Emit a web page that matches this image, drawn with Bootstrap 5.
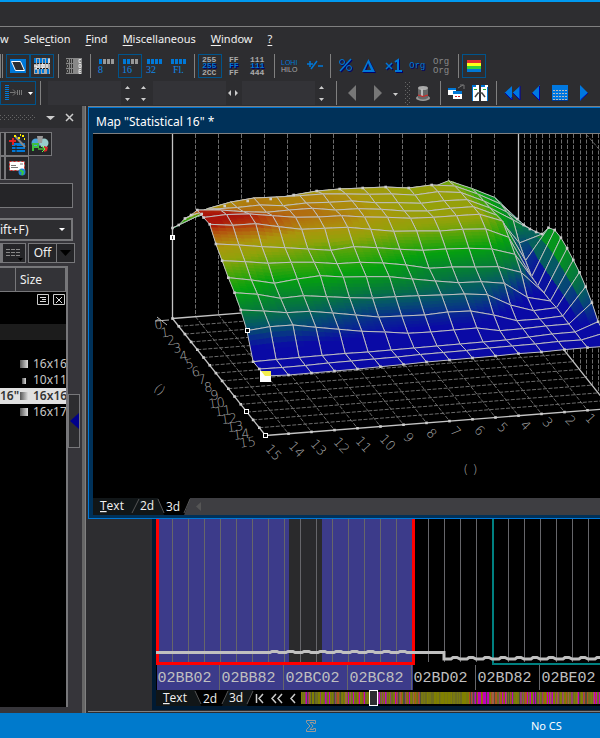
<!DOCTYPE html>
<html lang="en">
<head>
<meta charset="utf-8">
<meta name="viewport" content="width=device-width, initial-scale=1">
<title>Map editor</title>
<link href="https://cdn.jsdelivr.net/npm/bootstrap@5.3.0/dist/css/bootstrap.min.css" rel="stylesheet">
<style>
body{background:#2d2d30;color:#f1f1f1;font:12px/16px "Noto Sans","Open Sans",sans-serif;min-height:100vh;overflow:hidden}
button{color:inherit;font:inherit;padding:0;border:0;background:none}
svg{display:block}
.caption-bar{height:27px;border-top:2px solid #0099f0;border-bottom:1px solid #808080}
.menu-bar{height:27px;gap:15px;padding-top:4px;font-size:11px}
.menu-bar a{color:#f1f1f1;text-decoration:none}
.menu-bar u{text-underline-offset:2px}
.tool-row{height:24px;overflow:hidden}
.tool-row.second{margin-top:3px;height:25px}
.tool{width:24px;height:24px;flex:none}
.tool.on{box-shadow:inset 0 0 0 1px #00548c}
.shade{filter:drop-shadow(1px 1px 0 #00006b)}
.rule{width:8px;height:24px;flex:none;background:linear-gradient(#808080,#808080) 4px 0/1px 100% no-repeat}
.field{width:73px;height:24px;border:0;background:#333337;color:#f1f1f1;flex:none}
.spin{flex:none}
.side{width:88px;flex:none;background:#36353a;position:relative;border-right:2px solid #2d2d30}
.side-main{width:82px;overflow:hidden}
.divider{width:4px;background:#666;border-right:1px solid #808080}
.side-head{height:22px;background:#2d2d30}
.cell{border:1px solid #77777a;height:24px;background:#252528;flex:none}
.cell.wide{width:24px;margin-right:-1px}
.search-box{width:73px;height:25px;border:1px solid #77777a;border-left:0;background:#252528;color:#fff;margin-top:3px}
.choice{width:73px;height:23px;border:2px solid #77777a;border-left:0;background:#2d2d30;color:#f1f1f1;appearance:none;font-size:12px;padding:0}
.map-list{width:68px;border:2px solid #77777a;border-left:0;border-bottom:0;background:#000}
.map-list th{font-weight:400;height:24px;background:#333337;border-right:1px solid #77777a;border-bottom:1px solid #77777a;padding:0 0 0 4px}
.map-list table{width:66px;table-layout:fixed;border-collapse:separate;border-spacing:0}
.map-list td{height:16px;padding:0;line-height:16px;color:#c8c8c8;white-space:nowrap;overflow:hidden}
.map-list td:first-child{overflow:visible}
.map-list .picked td{background:#e0e0e0;color:#333;font-weight:600}
.swatch{display:inline-block;width:8px;height:8px;background:linear-gradient(90deg,#555,#ddd);margin:0 5px 0 4px}
.swatch.little{width:4px;height:6px;margin:0 7px 0 6px}
.slide-btn{width:12px;height:54px;border:1px solid #77777a;background:#2d2d30}
.map-window{border:1px solid #0078d7;border-right:0;background:#003159;padding:0 0 3px 4px}
.map-title{height:26px;border-bottom:1px solid #808080;font:12px/28px "Noto Sans",sans-serif;padding-left:3px;color:#fff}
.plot-box{height:364px;background:#000;overflow:hidden}
.sheet-bar{height:17px;background:#3e3e42}
.tabs-shape{font:12px "Open Sans",sans-serif}
.hex-window{margin-left:64px;background:#001a33;padding:0 0 4px 4px}
.hex-plot{height:171px;background:#000;overflow:hidden}
.pos-bar{height:16px;background:#000}
.map-strip{position:relative;height:16px}
.map-strip input{appearance:none;position:absolute;inset:0;width:100%;height:16px;background:none;margin:0}
.map-strip input::-webkit-slider-thumb{appearance:none;width:9px;height:16px;background:#2d2d30;border:1px solid #fff}
.state-bar{height:25px;background:#007acc}
.state-bar .sigma{margin-left:305px}
.state-bar .cs{margin-left:214px;line-height:24px;color:#fff;font-size:11px}
</style>
</head>
<body class="d-flex flex-column">
<script src="https://cdn.jsdelivr.net/npm/bootstrap@5.3.0/dist/js/bootstrap.bundle.min.js"></script>
<div class="caption-bar"></div>
<nav class="menu-bar d-flex text-nowrap">
<a href="#">w</a><a href="#">Sele<u>c</u>tion</a><a href="#"><u>F</u>ind</a><a href="#"><u>M</u>iscellaneous</a><a href="#"><u>W</u>indow</a><a href="#"><u>?</u></a>
</nav>
<div class="tool-row d-flex" id="tools">
<div style="width:6px" class="flex-shrink-0"><svg width="6" height="24"><path d="M2.5 0V24M.5 0V24" stroke="#808080"/></svg></div>
<button class="tool on" aria-label="Shape"><svg width="24" height="24"><path fill="#0078d7" d="M4 5h16v14H4z"/><path d="M5.500 7.500h9l4 9h-9z" fill="#2d2d30" stroke="#fff"/></svg></button>
<button class="tool on" aria-label="Bits"><svg width="24" height="24"><path fill="#aaa" d="M4 4h16v16H4z"/><path d="M5 4v5M8 5v4M11 4v5M14 5v4M17 4v5M6 15v4M10 15v5M13 15v4M18 15v5" stroke="#0078d7" stroke-width="2"/><path d="M4 12h3v3H5M9 10v5M12 10h2v4h-2zM17 10v5M19 5v4" stroke="#fff" fill="none"/><path d="M4 9.5h16M7 14.5h11" stroke="#222" stroke-dasharray="2 1"/></svg></button>
<span class="rule"></span>
<button class="tool" aria-label="Columns"><svg width="24" height="24"><path fill="#888" d="M4 4h16v16H4z"/><path d="M4.500 5.500h2v3h-2zM8.500 5v4M10.500 5v4M4.500 10.500h2v3h-2zM8.500 10v4M10.500 10v4M4.500 15.500h2v3h-2zM8.500 15v4M10.500 15v4" stroke="#333" fill="none"/><path d="M19 5.500h-2v3h2M17 10.500h2v3h-2zM19 15.500h-2v4h2M17 17.500h2" stroke="#ddd" fill="none"/></svg></button>
<span class="rule"></span>
<button class="tool" data-bits="8" data-on="1" aria-label="8 bit"></button>
<button class="tool on" data-bits="16" data-on="2" aria-label="16 bit"></button>
<button class="tool" data-bits="32" data-on="4" aria-label="32 bit"></button>
<button class="tool" data-bits="Fl." data-on="4" aria-label="Float"></button>
<span class="rule"></span>
<button class="tool on" data-stack="255,255,2CC" aria-label="Decimal"></button>
<button class="tool" data-stack="FF,FF,FF" aria-label="Hexadecimal"></button>
<button class="tool" data-stack="111,111,444" aria-label="Binary"></button>
<span class="rule"></span>
<button class="tool" aria-label="Byte order"><svg width="24" height="24" font-family="Liberation Sans" font-size="7"><text x="3" y="11" fill="#0078d7">LOHI</text><text x="3" y="18" fill="#aaa">HILO</text></svg></button>
<button class="tool" aria-label="Sign"><svg width="24" height="24"><path d="M8 7v6M5 10h6M15 7l-6 8M16 12h5" stroke="#0078d7" stroke-width="1.500"/></svg></button>
<span class="rule"></span>
<button class="tool" aria-label="Percent"><svg class="shade" width="24" height="24" fill="none" stroke="#0078d7"><path d="M17 5L6 17" stroke-width="1.500"/><circle cx="8" cy="8" r="2.500"/><circle cx="15" cy="14" r="2.500"/></svg></button>
<button class="tool" aria-label="Difference"><svg class="shade" width="24" height="24"><path d="M4 18L10.500 5L17 18zM7 16h6L10 9z" fill="#0078d7" fill-rule="evenodd"/></svg></button>
<button class="tool" aria-label="Factor"><svg class="shade" width="24" height="24"><path d="M4 9l6 6M10 9l-6 6" stroke="#0078d7" stroke-width="1.500"/><path d="M13 8l3-2v11m-3 0h7" stroke="#0078d7" stroke-width="2" fill="none"/></svg></button>
<button class="tool" aria-label="Original"><svg class="shade" width="24" height="24" font-family="Liberation Mono" font-size="9"><text x="3" y="14" fill="#0078d7">Org</text></svg></button>
<button class="tool" aria-label="Original pair"><svg width="24" height="24" font-family="Liberation Mono" font-size="9" fill="#888"><text x="3" y="10">Org</text><text x="3" y="19">Org</text></svg></button>
<span class="rule"></span>
<button class="tool on" aria-label="Colours"><svg width="24" height="24"><path fill="#e03030" d="M5 6h14v3H5z"/><path fill="#ffff18" d="M5 9h14v3H5z"/><path fill="#35d03a" d="M5 12h14v3H5z"/><path fill="#0078d7" d="M5 15h14v3H5z"/></svg></button>
</div>
<div class="tool-row second d-flex">
<button class="tool on" style="width:36px" aria-label="Insert"><svg width="36" height="24"><path d="M5 4.500h4M5 6.500h4M5 8.500h4M5 10.500h4M5 12.500h4M5 14.500h4M5 16.500h4M5 18.500h4" stroke="#0078d7"/><path d="M10 11.500h5M13 8.500l3 3l-3 3M17.500 9v5M19.500 9v5M21.500 9v5" stroke="#777" fill="none"/><path d="M28 11h5l-2.500 3z" fill="#fff"/></svg></button>
<span class="rule"></span>
<input class="field ms-1" aria-label="First value">
<svg class="spin" width="16" height="24"><path d="M4 8h5L6.500 5zM4 17h5L6.500 20z" fill="#ccc"/></svg>
<svg class="spin" width="16" height="24"><path d="M4 8h5L6.500 5zM4 17h5L6.500 20z" fill="#ccc"/></svg>
<input class="field" aria-label="Second value">
<svg class="spin" width="16" height="24"><path d="M5 9v6l-3-3zM9 9v6l3-3z" fill="#ccc"/></svg>
<input class="field" aria-label="Third value">
<svg class="spin" width="17" height="24"><path d="M4 8h5L6.500 5zM4 17h5L6.500 20z" fill="#ccc"/></svg>
<span class="rule"></span>
<button class="tool" aria-label="Back"><svg width="24" height="24"><path d="M16 4v16L8 12z" fill="#777"/></svg></button>
<button class="tool" aria-label="Forward"><svg width="24" height="24"><path d="M10 4v16L18 12z" fill="#777"/></svg></button>
<button aria-label="History"><svg width="16" height="24"><path d="M5 11h5L7.500 14z" fill="#ccc"/></svg></button>
<svg width="8" height="24" class="flex-shrink-0"><path d="M1.500 1V24M3.500 3V24M5.500 1V24" stroke="#666" stroke-dasharray="1 3"/></svg>
<button class="tool" aria-label="Hat"><svg width="24" height="24"><ellipse cx="11" cy="17" rx="7" ry="3" fill="#999"/><path d="M6 8h10v9q-5 3-10 0z" fill="#666"/><ellipse cx="11" cy="7" rx="5" ry="2" fill="#aaa"/><path d="M9 8v7h2V8z" fill="#bbb"/><path d="M6 14q5 3 10 0" stroke="#e02020" fill="none"/></svg></button>
<span class="rule"></span>
<button class="tool" aria-label="Windows"><svg width="24" height="24"><path fill="#fff" d="M4 8h8v6H4zM9 11h9v7H9z"/><path fill="#0078d7" d="M4 7h8v2H4zM9 10h9v3H9z"/><path d="M11 15.500h2M14 15.500h2" stroke="#d02020"/><path d="M14 7l5-3M16 4h4v4" stroke="#777" fill="none"/></svg></button>
<button class="tool" aria-label="Compare"><svg width="24" height="24"><path fill="#fff" d="M4 4h7v16H4zM13 4h7v16h-7z"/><path fill="#0078d7" d="M4 4h4v2H4zM13 4h4v2h-4zM4 6h1v14H4zM19 6h1v14h-1z"/><path d="M6 8.500h3M15 8.500h3" stroke="#1fb030"/><path d="M7 16l3-4h4l3 4" stroke="#444" stroke-width="1.500" fill="none"/></svg></button>
<span class="rule"></span>
<button class="tool" aria-label="First"><svg width="24" height="24"><path d="M12 5v14L4.500 12zM20 5v14L12.500 12z" fill="#0078e0"/><path d="M5 12l7 7V16M13 12l7 7V5" fill="none" stroke="#0000a8"/></svg></button>
<button class="tool" aria-label="Previous"><svg width="24" height="24"><path d="M16 4v16L8 12z" fill="#0078e0"/><path d="M8 12l7.500 7.500V5" fill="none" stroke="#0000a8"/></svg></button>
<button class="tool" aria-label="Table"><svg width="24" height="24"><path fill="#0078e0" d="M4 4h16v16H4z"/><path d="M5 9.500h14M5 12.500h14M5 15.500h14M5 18.500h14" stroke="#bbb" stroke-dasharray="2 1"/><path d="M4 19.500h16" stroke="#003a90"/></svg></button>
<button class="tool" aria-label="Next"><svg width="24" height="24"><path d="M8 4v16L16 12z" fill="#0078e0"/><path d="M8.500 19L16 12" fill="none" stroke="#0000a8"/></svg></button>
</div>
<main class="d-flex flex-grow-1">
<aside class="side d-flex">
<div class="side-main">
<div class="side-head d-flex align-items-center">
<svg width="82" height="22"><path d="M0 9.500h36M2 11.500h34M0 13.500h36" stroke="#666" stroke-dasharray="1 3"/><path d="M46 10h9l-4.500 4z" fill="#ccc"/><path d="M66 8l7 7M73 8l-7 7" stroke="#ccc" stroke-width="1.500"/></svg>
</div>
<div class="d-flex mt-1">
<button class="cell" style="width:5px" aria-label="Tool"></button>
<button class="cell wide" aria-label="Wizard"><svg width="22" height="22"><path d="M6 10h13v9H6z" fill="#0078d7"/><path d="M6 13.500h13M6 16.500h13M10 12v7" stroke="#222"/><path d="M3 8h7M7 5v7" stroke="#e02020" stroke-width="2"/><path d="M9 3l10 11" stroke="#888" stroke-width="2"/><path d="M8 3h2M12 5h2M16 3h2M18 6h1M14 2h1" stroke="#ffef00" stroke-width="2"/></svg></button>
<button class="cell wide" aria-label="Exchange"><svg width="22" height="22"><circle cx="7" cy="10" r="4.500" fill="#4aa5dc"/><circle cx="15" cy="10" r="4.500" fill="#9cc"/><path d="M8 3h6l-1 7H9z" fill="#999"/><path d="M4 18V11h5v3H5" stroke="#3fc03f" stroke-width="2" fill="none"/><path d="M15 13l4 1l-1 4l-3 1z" fill="#d02828"/><path d="M9 16h7M13 13l3 3l-3 3" stroke="#60ff40" fill="none"/></svg></button>
</div>
<div class="d-flex">
<button class="cell" style="width:5px" aria-label="Tool"></button>
<button class="cell wide" aria-label="Mail"><svg width="22" height="22"><path d="M3.500 4.500h15v9h-15z" fill="#fff" stroke="#d02828" stroke-dasharray="2 2"/><path d="M5 8.500h5M5 10.500h7M14 7h3" stroke="#777"/><circle cx="16" cy="15" r="3.500" fill="#2080d8"/><path d="M14 13l3 2l-1 3" stroke="#3cc83c" stroke-width="2" fill="none"/></svg></button>
</div>
<input class="search-box d-block" aria-label="Search">
<div class="position-relative" style="margin-top:10px"><select class="choice d-block" aria-label="Shortcut"><option>ift+F)</option></select><svg class="position-absolute top-0" style="left:52px" width="20" height="23"><path d="M7 10h6l-3 3z" fill="#fff"/></svg></div>
<div class="d-flex" style="margin-top:2px">
<button class="cell" style="width:2px;height:20px" aria-label="Tool"></button>
<button class="cell" style="width:24px;height:20px" aria-label="Rows"><svg width="22" height="18"><path d="M3 5.500h14M3 8.500h14M3 11.500h14" stroke="#888" stroke-dasharray="4 1"/><path d="M15 14h5l-2.500 3z" fill="#000"/></svg></button>
<button class="cell" style="width:29px;height:20px;margin-left:2px" >Off</button>
<button class="cell" style="width:19px;height:20px;margin-left:-1px" aria-label="Mode"><svg width="17" height="18"><path d="M3 6h11l-5.500 6z" fill="#000"/></svg></button>
</div>
<div class="d-flex" style="margin-top:3px">
<div class="map-list" style="height:441px">
<table>
<colgroup><col style="width:16px"><col></colgroup>
<thead><tr><th aria-label="Name"></th><th>Size</th></tr></thead>
<tbody>
<tr><td></td><td class="text-end"><svg class="d-inline-block align-top" width="32" height="16"><path d="M3.500 2.500h11v10h-11zM19.500 2.500h11v10h-11z" fill="none" stroke="#ccc"/><path d="M6 5.500h6M8 7.500h4M6 9.500h6M22 5l6 6M28 5l-6 6" stroke="#ddd"/></svg></td></tr>
<tr><td></td><td></td></tr>
<tr><td colspan="2" style="background:#1c1c1c"></td></tr>
<tr><td></td><td></td></tr>
<tr><td></td><td><i class="swatch"></i>16x16</td></tr>
<tr><td></td><td><i class="swatch little"></i>10x11</td></tr>
<tr class="picked"><td><span class="position-relative">16"</span></td><td><i class="swatch"></i>16x16</td></tr>
<tr><td></td><td><i class="swatch"></i>16x17</td></tr>
</tbody></table>
</div>
<button class="slide-btn" style="margin-top:128px" aria-label="Collapse"><svg width="10" height="52"><path d="M10 18v16L1 26z" fill="#00008b"/></svg></button>
</div>
</div>
<div class="divider"></div>
</aside>
<div class="flex-grow-1 overflow-hidden" style="border-top:1px solid #808080;border-bottom:1px solid #808080;margin-bottom:1px">
<section class="map-window">
<div class="map-title">Map "Statistical 16" *</div>
<div class="plot-box"><svg id="surface" width="100%" height="364" viewBox="93 134 507 364" preserveAspectRatio="xMinYMin slice" font-family="DejaVu Sans, sans-serif" font-size="13" fill="#a8a8a8"></svg></div>
<div class="sheet-bar d-flex tabs-shape">
<svg width="97" height="17" class="flex-shrink-0" fill="#f1f1f1"><path d="M0 0H97L91 17H0z" fill="#111618"/><path d="M65 0H97L91 17H71z" fill="#000"/><path d="M39 15L46 1M65 1L71 15M91 15L97 1" stroke="#555"/><text x="7" y="12"><tspan text-decoration="underline">T</tspan>ext</text><text x="47" y="12">2d</text><text x="73" y="13">3d</text></svg>
<svg width="24" height="17"><path d="M11 4v9L6 8.500z" fill="#555"/></svg>
</div>
</section>
<section class="hex-window">
<div class="hex-plot"><svg id="hex" width="100%" height="171" viewBox="156 519 444 171" preserveAspectRatio="xMinYMin slice" font-family="Liberation Mono, monospace" font-size="15" fill="#c0c0c0"></svg></div>
<div class="pos-bar d-flex tabs-shape">
<svg width="145" height="16" class="flex-shrink-0" fill="#f1f1f1"><path d="M0 0H97L91 16H0z" fill="#111618"/><path d="M39 0H72L66 16H45z" fill="#000"/><path d="M39 1L45 14M66 14L72 1M91 14L97 1" stroke="#555"/><text x="7" y="12"><tspan text-decoration="underline">T</tspan>ext</text><text x="47" y="13">2d</text><text x="73" y="12">3d</text><path d="M100.500 4v9M107 4l-4 4.500l4 4.500M120 4l-4 4.500l4 4.500M126 4l-4 4.500l4 4.500M139 4l-4 4.500l4 4.500" fill="none" stroke="#ccc" stroke-width="1.500"/></svg>
<div class="map-strip flex-grow-1 overflow-hidden"><svg id="strip" width="100%" height="16" viewBox="0 0 299 16" preserveAspectRatio="none"></svg><input type="range" min="0" max="290" value="68" aria-label="Position"></div>
</div>
</section>
</div>
</main>
<footer class="state-bar d-flex align-items-center"><svg class="sigma flex-shrink-0" width="12" height="14"><path d="M1.500 1.500h9v3h-2v-1H5l3 3.500l-3 3.500h3.500v-1h2v3h-9v-2l3.500-3.500l-3.500-3.500z" fill="none" stroke="#999"/></svg><span class="cs">No CS</span></footer>
<script>
const put = (id, s) => { document.getElementById(id).innerHTML = s; };

// Toolbar glyphs built from text
document.querySelectorAll('[data-bits]').forEach(b => {
  let s = '';
  for (let k = 0; k < 4; k++) s += `<rect x="${5 + 4 * k}" y="5" width="3" height="5" fill="${k < b.dataset.on ? '#0078d7' : '#999'}"/>`;
  b.innerHTML = `<svg width="24" height="24">${s}<text x="${b.dataset.bits === 'Fl.' ? 7 : 4}" y="19" font-size="10" font-family="Liberation Serif" fill="#1088e8">${b.dataset.bits}</text></svg>`;
});
document.querySelectorAll('[data-stack]').forEach(b => {
  const t = b.dataset.stack.split(','), x = t[0].length < 3 ? 7 : 4;
  b.innerHTML = `<svg width="24" height="24" font-size="8" font-family="Liberation Mono" font-weight="700"><text x="${x}" y="8" fill="#aaa">${t[0]}</text><text class="shade" x="${x}" y="14" fill="#0078d7">${t[1]}</text><text x="${x}" y="21" fill="#aaa">${t[2]}</text></svg>`;
});

// Surface: screen heights of the 16 x 16 map, back row first
const Y = [
 [228,217,210,205,202,200,197,195,193,192,191,190,180.7,188.3,197.3,219],
 [225,214,206,201,199,195,191,189,188,187,188,185,186,194,204,225],
 [218.500,208.500,202,198,197,195.700,194,194,194.300,194,195,191.700,192.500,201,212,229],
 [215,209,207.500,205,205.700,203,202.300,201,202.700,202.700,203.300,200.700,199.700,208,220,232],
 [210,210,211.700,212.300,210,208.300,210,208.700,209.300,211,211,208.300,206.700,215,243,234],
 [217.500,214.500,214,215.700,217.300,217,215.700,217,217.300,218.300,217.300,215.700,214.300,221,260.700,227.700],
 [224.300,225.300,223.700,226.700,229.300,228.300,227.300,229.300,231.300,231,231,229.300,229,237.300,276.700,230],
 [244,245,246.700,247.700,249,250.300,246.700,247.700,249.300,250.300,249,248.300,249,254.300,285.700,237.700],
 [260.700,261.700,263.300,262.300,262.300,263.700,262.300,263,265,268.300,267,267,266.700,272.300,293,248.300],
 [277.700,280,283.300,279,275.700,277,276.700,276.700,279,281,282.700,281.700,283.300,297.300,301,260],
 [292.700,294.300,298.300,295.700,296.700,297.700,298,296.700,295.700,295,294,294.700,305,310.700,307.700,272.300],
 [310,311,312.700,311.300,313,315,317,316,315,312,311,315,320.700,319,316,286.700],
 [330.700,326.700,325,327.300,329.300,331.300,332,333.300,332,330,328,330.700,328.700,326,324,302.700],
 [361.700,359.500,357.500,355.500,353.500,352,350,348,346,344,342,340,337,334,332,321.700],
 [369,367.500,365.500,363,361,359,357,354.500,352.500,350.500,348,346,344,341.500,340,333],
 [376,375,373,371,369,366.700,364.500,362,360,358,356,353.600,352,349.600,347.600,346]];
const X = (i, j) => 172.500 + 23 * i + 6.2 * j, F = (i, j) => 318.500 - 1.8 * i + 7.8 * j;
const ramp = [[68,10,10,165],[76,8,45,140],[84,5,85,105],[92,5,120,60],[104,5,160,15],[112,70,165,10],[120,145,162,10],[127,170,150,12],[133,178,105,15],[138,178,55,12],[140,170,22,10]];
function tint(h) {
  if (h <= 68) return 'rgb(10,10,165)';
  for (let k = 1; k < ramp.length; k++) if (h < ramp[k][0]) {
    const a = ramp[k - 1], b = ramp[k], t = (h - a[0]) / (b[0] - a[0]);
    return `rgb(${[1, 2, 3].map(n => Math.round(a[n] + (b[n] - a[n]) * t))})`;
  }
  return 'rgb(170,20,10)';
}
const line = (a, b, c, d, extra = '') => `<path d="M${a} ${b}L${c} ${d}" ${extra}/>`;
let g = '<g stroke="#6c6c6c" stroke-dasharray="4 1.500" fill="none">';
for (let i = 1; i < 15; i++) g += line(X(i, 0), 134, X(i, 0), F(i, 0));
for (let j = 1; j < 16; j++) g += line(Math.round(X(15, j)) + .5, 134, Math.round(X(15, j)) + .5, F(15, j));
for (let k = 1; k < 15; k++) g += line(X(0, k), F(0, k), X(15, k), F(15, k)) + line(X(k, 0), F(k, 0), X(k, 15), F(k, 15));
g += line(586, 134, 610, 162) + '</g><g stroke="#c4c4c4" stroke-width="1.300" fill="none">';
g += line(172.500, 134, 172.500, 318) + line(518.500, 134, 518.500, 291) + line(X(0, 0), F(0, 0), X(15, 0), F(15, 0)) + line(X(0, 0), F(0, 0), X(0, 15), F(0, 15)) + line(X(0, 15), F(0, 15), X(15, 15), F(15, 15)) + line(X(15, 0), F(15, 0), X(15, 15), F(15, 15)) + '</g>';
const U = 3, V = 6;
for (let j = 0; j < 15; j++) for (let i = 14; i >= 0; i--) {
  const at = (u, v) => {
    const mix = q => (q(i, j) * (1 - u) + q(i + 1, j) * u) * (1 - v) + (q(i, j + 1) * (1 - u) + q(i + 1, j + 1) * u) * v;
    return [mix(X), mix((a, b) => Y[b][a]), mix(F)];
  };
  g += '<g shape-rendering="crispEdges">';
  for (let v = 0; v < V; v++) for (let u = 0; u < U; u++) {
    const p = [at(u / U, v / V), at((u + 1) / U, v / V), at((u + 1) / U, (v + 1) / V), at(u / U, (v + 1) / V)];
    const h = p.reduce((s, q) => s + q[2] - q[1], 0) / 4, c = tint(h);
    g += `<polygon points="${p.map(q => q[0].toFixed(1) + ',' + q[1].toFixed(1)).join(' ')}" fill="${c}" stroke="${c}" stroke-width=".5"/>`;
  }
  g += '</g>';
  const c = [at(0, 0), at(1, 0), at(1, 1), at(0, 1)];
  g += `<polygon points="${c.map(q => q[0].toFixed(1) + ',' + q[1].toFixed(1)).join(' ')}" fill="none" stroke="#c0c0c0"/>`;
}
const dot = (x, y, r = 1.300) => `<rect x="${x - r}" y="${y - r}" width="${2 * r}" height="${2 * r}" fill="#ccc"/>`;
for (let k = 0; k < 16; k++) g += dot(X(0, k), F(0, k)) + dot(X(k, 15), F(k, 15)) + dot(X(15, k), Y[k][15]) + dot(X(0, k), Y[k][0]) + dot(X(k, 15), Y[15][k]);
for (let k = 1; k < 12; k++) g += dot(X(k, 1), Y[1][k]);
g += '<g fill="#000" stroke="#fff"><rect x="245.500" y="328.500" width="4" height="4"/><rect x="244.500" y="409.500" width="4" height="4"/><rect x="263.500" y="433.500" width="4" height="4"/></g>';
g += '<rect x="260" y="371" width="11" height="11" fill="#fff"/><path d="M261 371h10v5h-6z" fill="#f4ee50"/><rect x="170" y="235" width="5" height="5" fill="#fff"/><path d="M172.500 236v3" stroke="#444"/>';
const label = (x, y, r, t) => `<text transform="translate(${x} ${y}) rotate(${r})" text-anchor="middle" y="5">${t}</text>`;
g += '<g font-weight="200">';
for (let n = 0; n < 16; n++) g += label(158.500 + 6.2 * n - (n > 9 ? 4 : 0), 324 + 7.850 * n, -8, n);
[[591,418],[571,420],[548,422],[526,425],[503,427],[480,430],[456,431],[432,433],[409,437],[388,442],[364,444],[342,445],[319,447],[297,449],[274,452]].forEach((p, k) => g += label(p[0], p[1], 47, k + 1));
g += label(160, 389, 40, '()') + label(470.500, 469, 0, '( )') + '<path d="M155 321l14-1M157 317l10 8" stroke="#bbb"/></g>';
put('surface', g);

// Hex trace
let h = '<rect x="157" y="519" width="256" height="146" fill="#3c3b8a"/><rect x="289" y="519" width="33" height="146" fill="#2a2a2c"/><rect x="157" y="665" width="256" height="25" fill="#3c3b8a"/><g stroke="#66666a">';
for (let x = 172.500; x < 1600; x += 16) h += line(x, 519, x, 662);
for (let x = 219.500; x < 1600; x += 64) h += line(x, 665, x, 690);
h += '</g><path d="M157.500 519V663.500H413.500V519" fill="none" stroke="#f00" stroke-width="3"/><path d="M493 519V664H1600" fill="none" stroke="#008080" stroke-width="2"/>';
let d = 'M156 652.500H270';
for (let x = 270; x < 414; x += 16) d += `l2 -1h5l2 1h7`;
d += 'H444V659';
for (let x = 444; x < 1600; x += 16) d += 'h7l2 -1.500h4l3 1.500';
h += `<path d="${d}" fill="none" stroke="#c0c0c0" stroke-width="3"/>`;
['02BB02','02BB82','02BC02','02BC82','02BD02','02BD82','02BE02'].forEach((t, k) => h += `<text x="${157.500 + 64 * k}" y="682">${t}</text>`);
put('hex', h);

// Overview strip
const hues = ['#808000','#6c6c20','#787810','#c000c0','#a06048','#707020','#505038','#904070','#b05020','#808000'];
let s = '<g shape-rendering="crispEdges">', seed = 7;
const next = () => (seed = (seed * 48271) % 2147483647) / 2147483647;
for (let x = 0; x < 299; x++) {
  const r = Math.floor(next() * 10);
  const c = x > 123 && x < 168 ? hues[r % 3] : (x > 172 && x < 188 && r < 6 ? '#c000c0' : hues[r]);
  s += `<rect x="${x}" y="2" width="1" height="12" fill="${c}"/>`;
}
put('strip', s + '</g>');
</script>
</body>
</html>
